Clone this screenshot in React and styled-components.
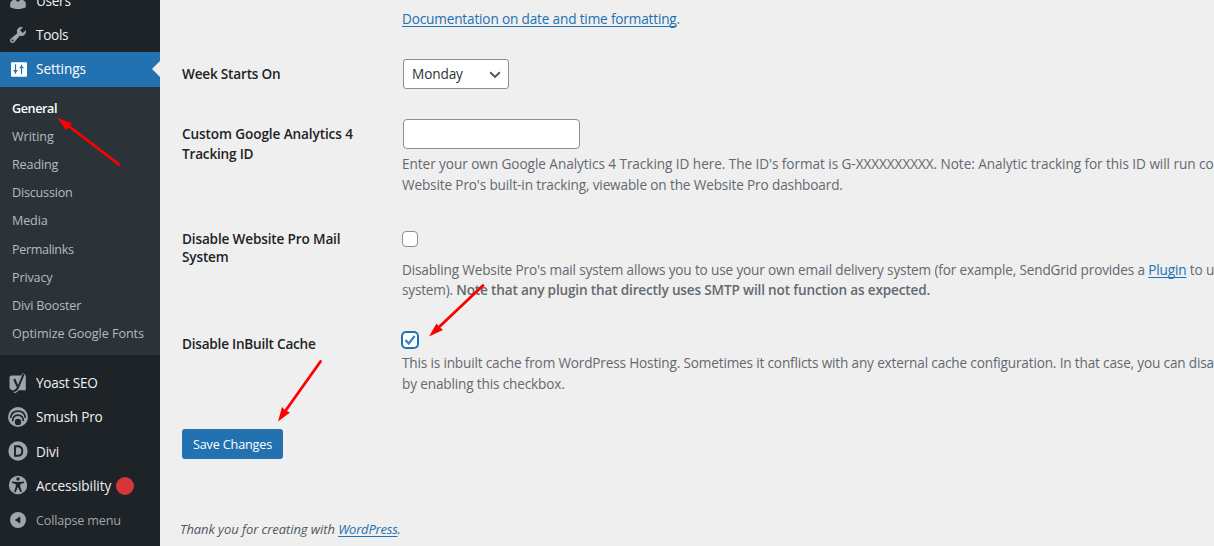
import React from 'react';
import styled, { createGlobalStyle, css } from 'styled-components';

const c = {
  page: '#efefef',
  base: '#1d2327',
  sub: '#2c3338',
  blue: '#2271b1',
  icon: '#a1a6ab',
  muted: '#646970',
  text: '#3c434a',
  border: '#8c8f94',
};

const GlobalStyle = createGlobalStyle`
  * { box-sizing: border-box; }
  body {
    margin: 0;
    overflow: hidden;
    background: ${c.page};
    color: ${c.text};
    font-family: 'Open Sans', 'Noto Sans', sans-serif;
    font-size: 13.6px;
  }
`;

const Screen = styled.div`
  position: relative;
  display: flex;
  width: 1214px;
  height: 546px;
  overflow: hidden;
`;

/* Sidebar */
const Sidebar = styled.nav`
  flex: 0 0 160px;
  background: ${c.base};
  overflow: hidden;
`;

const MenuGroup = styled.ul`
  margin: ${(p) => p.$offset}px 0 0;
  padding: 0;
  list-style: none;
`;

const MenuItem = styled.li`
  position: relative;
  display: flex;
  align-items: center;
  height: 34.25px;
  padding-left: 8px;
  gap: 8px;
  color: #f0f0f1;
  letter-spacing: ${(p) => p.$track ?? -0.13}px;
  white-space: nowrap;

  ${(p) => p.$current && css`
    height: 35px;
    padding-bottom: 1.5px;
    background: ${c.blue};
    color: #fff;
    &::after {
      content: '';
      position: absolute;
      right: 0;
      top: 9px;
      border: 8px solid transparent;
      border-left-width: 0;
      border-right-color: ${c.page};
    }
  `}

  ${(p) => p.$quiet && css`
    padding-top: 1px;
    color: ${c.icon};
    font-size: 12.6px;
  `}
`;

const Icon = styled.svg`
  flex: none;
  width: 20px;
  height: 20px;
  color: ${(p) => (p.$bright ? '#fff' : c.icon)};
`;

const Badge = styled.span`
  width: 18px;
  height: 18px;
  margin: 1px 0 0 -3px;
  border-radius: 50%;
  background: #d63638;
`;

const Submenu = styled.ul`
  height: 268px;
  margin: 0;
  padding: 8px 0 0 12px;
  list-style: none;
  background: ${c.sub};
`;

const SubItem = styled.li`
  height: 28.12px;
  line-height: 28px;
  font-size: 12.6px;
  color: #b6babe;
  letter-spacing: ${(p) => p.$track ?? -0.15}px;
  white-space: nowrap;

  ${(p) => p.$current && css`
    color: #fff;
    font-weight: 600;
  `}
`;

/* Form */
const Content = styled.main`
  flex: 1;
  min-width: 0;
  padding-left: 20px;
  overflow: hidden;
`;

const FormRow = styled.section`
  display: grid;
  grid-template-columns: 220px minmax(0, 1fr);
  height: ${(p) => p.$height}px;
  padding-left: 2px;
`;

const Label = styled.div`
  padding-top: ${(p) => p.$top}px;
  color: ${c.base};
  font-weight: 600;
  line-height: ${(p) => p.$leading ?? 18}px;
  white-space: nowrap;
`;

const Field = styled.div`
  min-width: 0;
  padding-top: 15px;
`;

const Description = styled.p`
  margin: ${(p) => p.$gap}px 0 0;
  color: ${c.muted};
  line-height: ${(p) => p.$leading ?? 21}px;
  white-space: nowrap;
`;

const Line = styled.span`
  display: block;
  letter-spacing: ${(p) => p.$track ?? 0}px;
`;

const Strong = styled.strong`
  font-weight: 600;
  letter-spacing: -0.17px;
`;

const Link = styled.a`
  color: ${c.blue};
  text-decoration: underline;
  text-underline-offset: 2px;
  text-decoration-thickness: 1px;
  text-decoration-skip-ink: none;
`;

const Select = styled.div`
  display: flex;
  align-items: center;
  justify-content: space-between;
  width: 106px;
  height: 30px;
  margin-left: 1px;
  padding: 0 6px 1px 8px;
  border: 1px solid ${c.border};
  border-radius: 3px;
  background: #fff;
  color: #2c3338;
  letter-spacing: -0.1px;
`;

const TextInput = styled.input`
  display: block;
  width: 177px;
  height: 30px;
  margin: 0 0 0 1px;
  border: 1px solid ${c.border};
  border-radius: 4px;
  background: #fff;
`;

const Checkbox = styled.div`
  display: flex;
  align-items: center;
  justify-content: center;
  width: 16px;
  height: 16px;
  border: 1px solid ${c.border};
  border-radius: 4px;
  background: #fff;

  ${(p) => p.$focused && css`
    margin-top: 2px;
    border-color: ${c.blue};
    box-shadow: 0 0 0 1px ${c.blue};
  `}
`;

const Button = styled.button`
  display: block;
  width: 101px;
  height: 30px;
  margin-left: 2px;
  padding: 1px 0 0;
  border: 0;
  border-radius: 3px;
  background: ${c.blue};
  color: #fff;
  font: 12.6px 'Open Sans', 'Noto Sans', sans-serif;
  letter-spacing: -0.15px;
`;

const Footer = styled.footer`
  margin-top: 60px;
  font-size: 13px;
  font-style: italic;
  line-height: 20px;
  color: #50575e;
  letter-spacing: -0.08px;

  ${Link} {
    letter-spacing: -0.2px;
  }
`;

const Annotations = styled.svg`
  position: absolute;
  inset: 0;
  pointer-events: none;
`;

const UsersIcon = () => (
  <Icon viewBox="0 0 20 20" fill="currentColor">
    <circle cx="10" cy="5.2" r="3.7" />
    <path d="M2.2 16.2v-3.4c0-2.3 2.3-4 4.8-4.4L10 11l3-2.6c2.5.4 4.8 2.1 4.8 4.4v3.4C15.5 17.3 13 18 10 18s-5.5-.7-7.8-1.8z" />
  </Icon>
);

const ToolsIcon = () => (
  <Icon viewBox="0 0 20 20" fill="currentColor">
    <path d="M16.68 9.77c-1.34 1.34-3.3 1.67-4.95.99l-5.41 6.52c-.99.99-2.59.99-3.58 0s-.99-2.59 0-3.57l6.52-5.42c-.68-1.65-.35-3.61.99-4.95 1.28-1.28 3.12-1.62 4.72-1.06l-2.89 2.89 2.82 2.82 2.86-2.87c.53 1.58.18 3.39-1.08 4.65zM3.81 16.21c.4.39 1.04.39 1.43 0 .4-.4.4-1.04 0-1.43-.39-.4-1.03-.4-1.43 0-.39.39-.39 1.03 0 1.43z" />
  </Icon>
);

const SettingsIcon = () => (
  <Icon $bright viewBox="0 0 20 20">
    <rect x="3" y="3.2" width="16" height="14.5" rx="0.7" fill="currentColor" />
    <path d="M7.5 5.2v9.5M13.5 5.7v9.5" stroke={c.blue} strokeWidth="1.1" />
    <path d="M5 11h5L7.5 13.9zM11 9.3h5L13.5 6.4z" fill={c.blue} />
  </Icon>
);

const YoastIcon = () => (
  <Icon viewBox="0 0 20 20" fill="none">
    <path d="M4 2.5h13.8v14.7H5.2C2.700 17.200 1.500 16 1.500 14V4.900c0-1.600.9-2.400 2.500-2.400z" fill="currentColor" />
    <path d="M15.900.9L10.400 14.200C9.400 16.800 8.200 18.300 5.800 18.500" stroke="currentColor" strokeWidth="3.400" />
    <path d="M15.700 1.200L10.200 14.200C9.300 16.500 8 17.700 5.900 18" stroke={c.base} strokeWidth="1.900" />
    <path d="M6.200 6l3.400 7.600" stroke={c.base} strokeWidth="2.100" />
  </Icon>
);

const SmushIcon = () => (
  <Icon viewBox="0 0 20 20" fill="none">
    <circle cx="10" cy="10" r="10" fill="currentColor" />
    <g stroke={c.base} strokeWidth="1.700">
      <path d="M2.500 10.800C3.200 6.400 6.100 4.200 10 4.200s6.800 2.200 7.500 6.600" />
      <path d="M4.700 14.100C4.500 10.100 6.800 8.200 10 8.200s5.500 1.900 5.300 5.900" />
    </g>
    <circle cx="10" cy="15" r="3.200" fill={c.base} />
  </Icon>
);

const DiviIcon = () => (
  <Icon viewBox="0 0 20 20" fill="none">
    <circle cx="10" cy="10" r="9.7" fill="currentColor" />
    <path d="M7 5.200h2.600c2.900 0 4.700 1.900 4.700 4.800s-1.800 4.800-4.700 4.800H7z" stroke={c.base} strokeWidth="1.900" />
  </Icon>
);

const AccessIcon = () => (
  <Icon viewBox="0 0 20 20">
    <circle cx="10" cy="10" r="9.200" fill="currentColor" />
    <g fill={c.base}>
      <circle cx="10" cy="4" r="1.700" />
      <path d="M4 6.500l4.500.5h3l4.500-.5v1.600l-3.700.9v2.700l1.600 5.100-1.500.500-2.100-4.800h-.6l-2.100 4.800-1.500-.5 1.600-5.100V9L4 8.100z" />
    </g>
  </Icon>
);

const CollapseIcon = () => (
  <Icon viewBox="0 0 20 20">
    <circle cx="10" cy="10" r="8" fill="currentColor" />
    <path d="M12.300 6.300v7.400L6.900 10z" fill={c.base} />
  </Icon>
);

const submenu = [
  ['General', -0.4],
  ['Writing', -0.05],
  ['Reading'],
  ['Discussion', -0.2],
  ['Media'],
  ['Permalinks', -0.35],
  ['Privacy'],
  ['Divi Booster'],
  ['Optimize Google Fonts', -0.06],
];

export default function App() {
  return (
    <Screen>
      <GlobalStyle />
      <Sidebar>
        <MenuGroup $offset={-16.5}>
          <MenuItem $track={-0.3}><UsersIcon />Users</MenuItem>
          <MenuItem $track={-0.3}><ToolsIcon />Tools</MenuItem>
          <MenuItem $current $track={-0.06}><SettingsIcon />Settings</MenuItem>
        </MenuGroup>
        <Submenu>
          {submenu.map(([name, track], i) => (
            <SubItem key={name} $current={i === 0} $track={track}>{name}</SubItem>
          ))}
        </Submenu>
        <MenuGroup $offset={10.5}>
          <MenuItem $track={-0.25}><YoastIcon />Yoast SEO</MenuItem>
          <MenuItem $track={-0.25}><SmushIcon />Smush Pro</MenuItem>
          <MenuItem><DiviIcon />Divi</MenuItem>
          <MenuItem $track={-0.05}><AccessIcon />Accessibility<Badge /></MenuItem>
          <MenuItem $quiet $track={-0.18}><CollapseIcon />Collapse menu</MenuItem>
        </MenuGroup>
      </Sidebar>

      <Content>
        <FormRow $height={44}>
          <Label $top={0} />
          <Description $gap={8}>
            <Line $track={-0.16}><Link>Documentation on date and time formatting</Link>.</Line>
          </Description>
        </FormRow>
        <FormRow $height={60}>
          <Label $top={21}><Line $track={-0.2}>Week Starts On</Line></Label>
          <Field>
            <Select>
              Monday
              <svg width="14" height="14" viewBox="0 0 14 14" fill="none">
                <path d="M2.200 5.300L7 9.900l4.800-4.600" stroke="#50575e" strokeWidth="2" />
              </svg>
            </Select>
          </Field>
        </FormRow>
        <FormRow $height={112}>
          <Label $top={20} $leading={20}>
            <Line $track={-0.11}>Custom Google Analytics 4</Line>
            <Line $track={-0.2}>Tracking ID</Line>
          </Label>
          <Field>
            <TextInput />
            <Description $gap={4}>
              <Line $track={-0.06}>Enter your own Google Analytics 4 Tracking ID here. The ID's format is G-XXXXXXXXXX. Note: Analytic tracking for this ID will run con</Line>
              <Line $track={-0.136}>Website Pro's built-in tracking, viewable on the Website Pro dashboard.</Line>
            </Description>
          </Field>
        </FormRow>
        <FormRow $height={99}>
          <Label $top={14}>
            <Line $track={-0.16}>Disable Website Pro Mail</Line>
            <Line $track={-0.16}>System</Line>
          </Label>
          <Field>
            <Checkbox />
            <Description $gap={13} $leading={20}>
              <Line $track={-0.15}>Disabling Website Pro's mail system allows you to use your own email delivery system (for example, SendGrid provides a <Link>Plugin</Link> to u</Line>
              <Line $track={-0.2}>system). <Strong>Note that any plugin that directly uses SMTP will not function as expected.</Strong></Line>
            </Description>
          </Field>
        </FormRow>
        <FormRow $height={114}>
          <Label $top={20}><Line $track={-0.23}>Disable InBuilt Cache</Line></Label>
          <Field>
            <Checkbox $focused>
              <svg width="14" height="14" viewBox="0 0 14 14" fill="none">
                <path d="M2.500 7L5.700 10.600L11.600 3" stroke="#3582c4" strokeWidth="2.200" />
              </svg>
            </Checkbox>
            <Description $gap={4}>
              <Line $track={-0.165}>This is inbuilt cache from WordPress Hosting. Sometimes it conflicts with any external cache configuration. In that case, you can disa</Line>
              <Line $track={-0.15}>by enabling this checkbox.</Line>
            </Description>
          </Field>
        </FormRow>
        <Button>Save Changes</Button>
        <Footer>Thank you for creating with <Link>WordPress</Link>.</Footer>
      </Content>

      <Annotations width="1214" height="546" viewBox="0 0 1214 546" fill="red">
        <g stroke="red" strokeWidth="2.800" strokeLinecap="round">
          <path d="M119 164.500L68 125.500" />
          <path d="M483 285.500L438 328" />
          <path d="M320.500 361.500L286 410" />
        </g>
        <path d="M57.500 118L72 123.300L69.500 126.500L66 130z" />
        <path d="M429 336.500L436.500 323.500L439 326.500L443 330z" />
        <path d="M278 421.500L282 407L285.500 410.500L290 412.500z" />
      </Annotations>
    </Screen>
  );
}
